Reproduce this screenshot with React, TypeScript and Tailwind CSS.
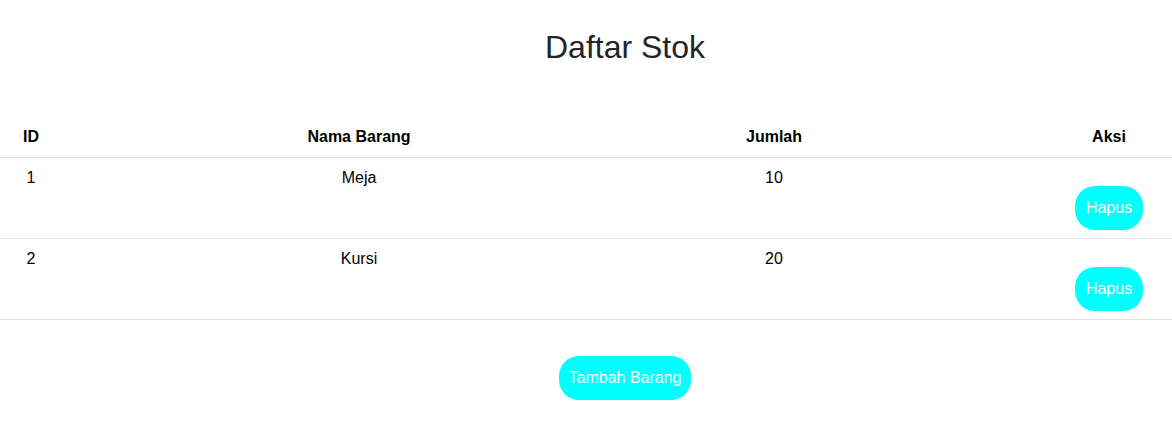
import React from "react";

const rows = [
  { id: 1, nama: "Meja", jumlah: 10 },
  { id: 2, nama: "Kursi", jumlah: 20 },
];

export default function App() {
  return (
    <div className="w-[1172px] h-[425px] bg-white text-black font-['Liberation_Sans',Arial,sans-serif] text-[16px]">
      <div className="pt-[27px] pl-[78px] flex justify-center">
        <h1 className="text-[32px] leading-[40px] text-[#212529] font-normal">Daftar Stok</h1>
      </div>
      <table className="mt-[50px] w-full border-collapse">
        <thead>
          <tr className="border-b border-[#dee2e6]">
            <th className="w-[62px] p-2 leading-6 font-bold text-center">ID</th>
            <th className="w-[594px] p-2 leading-6 font-bold text-center">Nama Barang</th>
            <th className="w-[236px] p-2 leading-6 font-bold text-center">Jumlah</th>
            <th className="p-2 leading-6 font-bold">
              <div className="ml-auto w-[110px] text-center">Aksi</div>
            </th>
          </tr>
        </thead>
        <tbody>
          {rows.map((r) => (
            <tr key={r.id} className="border-b border-[#dee2e6]">
              <td className="p-2 leading-6 text-center align-top">{r.id}</td>
              <td className="p-2 leading-6 text-center align-top">{r.nama}</td>
              <td className="p-2 leading-6 text-center align-top">{r.jumlah}</td>
              <td className="p-2 leading-6 align-top">
                <div className="ml-auto w-[110px] flex justify-center">
                  <button className="mt-[20px] h-[44px] px-[11px] rounded-[20px] bg-[#00ffff] text-white leading-6">
                    Hapus
                  </button>
                </div>
              </td>
            </tr>
          ))}
        </tbody>
      </table>
      <div className="pt-[36px] pl-[78px] flex justify-center">
        <button className="h-[44px] px-[10px] rounded-[20px] bg-[#00ffff] text-white leading-6">
          Tambah Barang
        </button>
      </div>
    </div>
  );
}
